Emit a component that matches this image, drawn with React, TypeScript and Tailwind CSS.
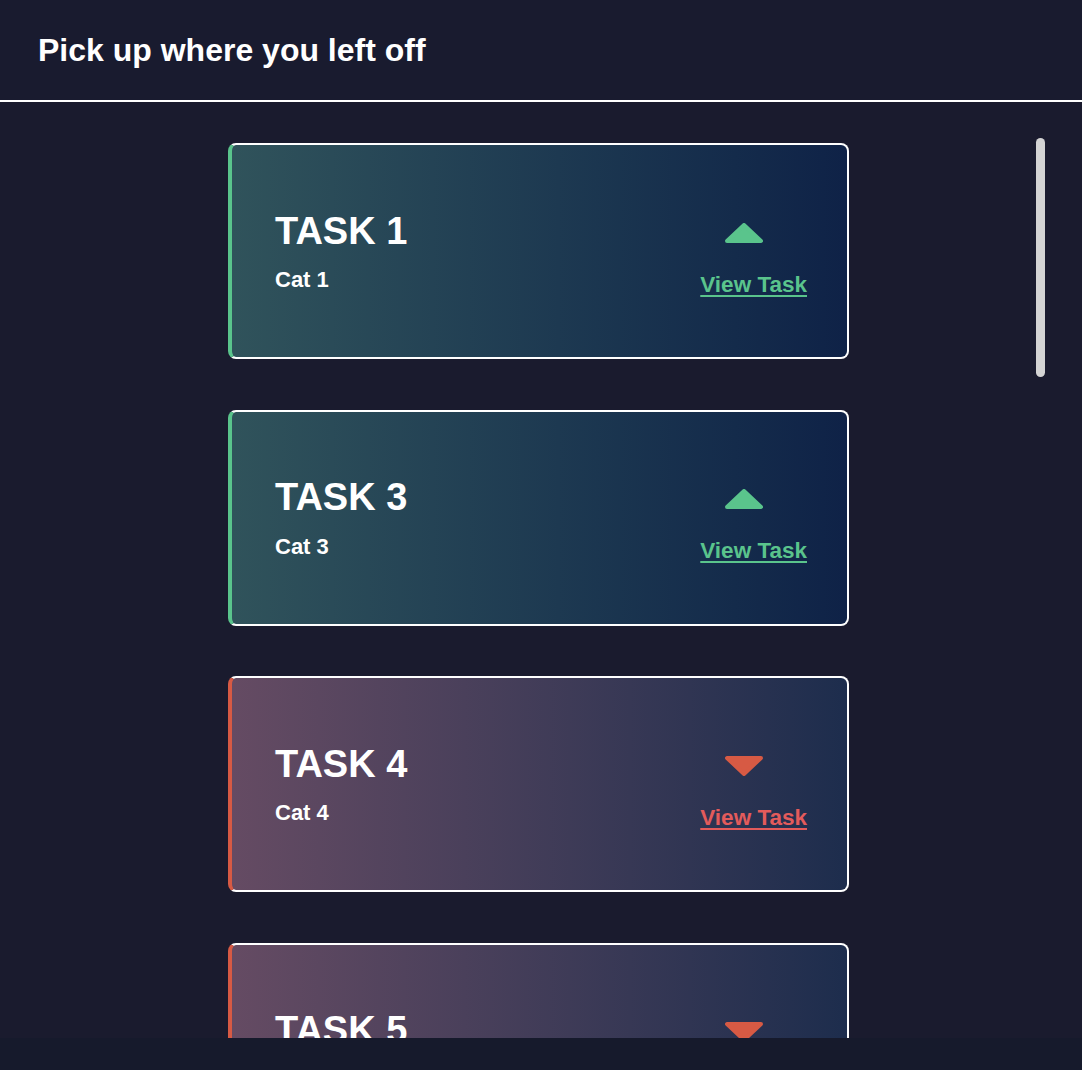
const tasks = [
  { id: 1, title: 'TASK 1', cat: 'Cat 1', up: true },
  { id: 3, title: 'TASK 3', cat: 'Cat 3', up: true },
  { id: 4, title: 'TASK 4', cat: 'Cat 4', up: false },
  { id: 5, title: 'TASK 5', cat: 'Cat 5', up: false },
];

function Arrow({ up }: { up: boolean }) {
  const color = up ? '#5ac48c' : '#d75a44';
  return (
    <svg width="38" height="20" viewBox="0 0 38 20" className="ml-[25px] self-start">
      <polygon
        points={up ? '19,2 36,18 2,18' : '2,2 36,2 19,18'}
        fill={color}
        stroke={color}
        strokeWidth="4"
        strokeLinejoin="round"
      />
    </svg>
  );
}

function TaskCard({ task }: { task: (typeof tasks)[0] }) {
  return (
    <div
      className={
        'flex h-[216px] w-[621px] shrink-0 items-center justify-between rounded-lg border-2 border-l-4 border-white pl-[43px] pr-[40px] bg-linear-to-r ' +
        (task.up
          ? 'border-l-[#5ac48c] from-[#30535b] to-[#0f2247]'
          : 'border-l-[#d75a44] from-[#654b63] to-[#1d2d4d]')
      }
    >
      <div className="flex flex-col text-white">
        <span className="text-[38px] font-bold">{task.title}</span>
        <span className="mt-[14px] text-[22px] font-bold">{task.cat}</span>
      </div>
      <div className="mt-[18px] flex flex-col">
        <Arrow up={task.up} />
        <a
          href="#"
          className={
            'mt-[29px] text-[22.5px] font-bold underline underline-offset-[3px] ' +
            (task.up ? 'text-[#5ac48c]' : 'text-[#e35b5b]')
          }
        >
          View Task
        </a>
      </div>
    </div>
  );
}

export default function App() {
  return (
    <div
      className="flex h-[1070px] w-full flex-col bg-[#161a2c] leading-[1.15]"
      style={{ fontFamily: '"Liberation Sans", Arial, sans-serif' }}
    >
      <header className="flex h-[100px] shrink-0 items-center bg-[#191b2f] px-[38px]">
        <h1 className="text-[32px] font-bold text-white">Pick up where you left off</h1>
      </header>
      <div className="h-[2px] shrink-0 bg-white" />

      {/* Scroll area */}
      <div className="relative h-[936px] shrink-0 overflow-hidden bg-[#1a1b2e]">
        <div className="flex flex-col items-center gap-[50.5px] pr-[5px] pt-[41px]">
          {tasks.map(t => (
            <TaskCard key={t.id} task={t} />
          ))}
        </div>
        {/* scrollbar thumb */}
        <div className="absolute right-[37px] top-[36px] h-[239px] w-[9px] rounded-full bg-[#d4d4d4]" />
      </div>
    </div>
  );
}
